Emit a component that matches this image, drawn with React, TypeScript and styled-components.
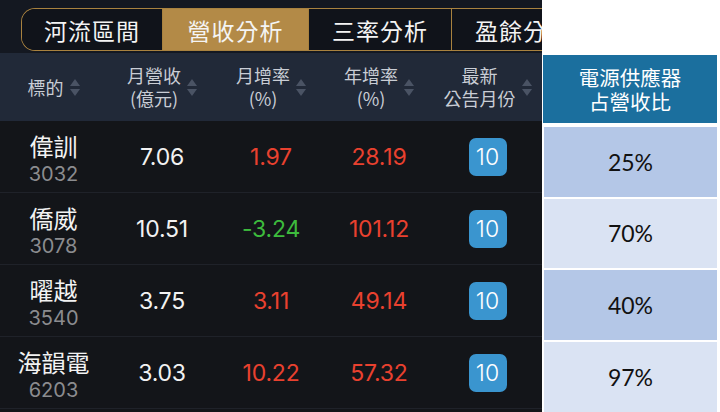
import React from "react";
import styled, { createGlobalStyle } from "styled-components";

const Global = createGlobalStyle`
  html, body { margin: 0; padding: 0; background: #ffffff; }
  body { width: 720px; height: 412px; overflow: hidden; }
`;

const Page = styled.div`
  display: flex;
  width: 720px;
  height: 412px;
  background: #ffffff;
  font-family: "Inter", "Noto Sans CJK TC", sans-serif;
`;

const Left = styled.div`
  width: 542px;
  height: 412px;
  background: #131519;
  overflow: hidden;
  display: flex;
  flex-direction: column;
`;

const TabBar = styled.div`
  height: 53px;
  box-sizing: border-box;
  padding: 8px 0 0 21px;
  background: #141821;
  flex: none;
`;

const Tabs = styled.div`
  display: flex;
  width: 600px;
  height: 43px;
  box-sizing: border-box;
  border: 1.5px solid #a9823f;
  border-right: none;
  border-radius: 14px 0 0 14px;
  overflow: hidden;
`;

const Tab = styled.div<{ $active?: boolean; $w: number }>`
  width: ${(p) => p.$w}px;
  flex: none;
  display: flex;
  align-items: center;
  justify-content: center;
  box-sizing: border-box;
  border-right: 1.5px solid #a9823f;
  background: ${(p) => (p.$active ? "#b38a47" : "#10131a")};
  color: #f4f4f4;
  font-family: "Noto Sans CJK TC", sans-serif;
  font-size: 23px;
  letter-spacing: 1px;
`;

const cols = "107px 110px 108px 108px 1fr";

const HeaderRow = styled.div`
  display: grid;
  grid-template-columns: ${cols};
  height: 68px;
  background: #212938;
  flex: none;
`;

const HeadCell = styled.div`
  display: flex;
  align-items: center;
  justify-content: center;
  gap: 6px;
`;

const HeadText = styled.div`
  color: #c9cdd5;
  font-family: "Noto Sans CJK TC", sans-serif;
  font-size: 18px;
  line-height: 23px;
  text-align: center;
`;

const Arrows = styled.div`
  display: flex;
  flex-direction: column;
  gap: 3px;
  margin-top: 1px;
`;

const Row = styled.div`
  display: grid;
  grid-template-columns: ${cols};
  height: 72px;
  box-sizing: border-box;
  border-bottom: 1px solid #1f2229;
  flex: none;
`;

const Cell = styled.div`
  display: flex;
  align-items: center;
  justify-content: center;
`;

const NameBox = styled.div`
  display: flex;
  flex-direction: column;
  align-items: center;
  padding-top: 5px;
`;

const Name = styled.div`
  color: #f2f2f2;
  font-family: "Noto Sans CJK TC", sans-serif;
  font-size: 24px;
  line-height: 30px;
`;

const Code = styled.div`
  color: #8b8c8f;
  font-size: 20px;
  line-height: 26px;
`;

const Num = styled.div<{ $color: string }>`
  color: ${(p) => p.$color};
  font-size: 23px;
  font-weight: 400;
  letter-spacing: -0.2px;
`;

const Badge = styled.div`
  width: 38px;
  height: 38px;
  border-radius: 7px;
  background: #3a95cf;
  color: #ffffff;
  font-size: 23px;
  font-weight: 300;
  display: flex;
  align-items: center;
  justify-content: center;
`;

const Right = styled.div`
  flex: 1;
  display: flex;
  flex-direction: column;
  padding: 55px 3px 0 1px;
  gap: 2px;
`;

const RHead = styled.div`
  height: 68px;
  background: #1b6f9e;
  color: #ffffff;
  font-family: "Noto Sans CJK TC", sans-serif;
  font-size: 20.5px;
  line-height: 24px;
  display: flex;
  flex-direction: column;
  align-items: center;
  justify-content: center;
  margin-bottom: 2px;
`;

const RCell = styled.div<{ $dark: boolean }>`
  height: 70px;
  margin-left: 1px;
  background: ${(p) => (p.$dark ? "#b4c7e7" : "#dae3f3")};
  color: #111111;
  font-family: "Lato", "Noto Sans", sans-serif;
  font-size: 23px;
  display: flex;
  align-items: center;
  justify-content: center;
`;

const SortIcon = () => (
  <Arrows>
    <svg width="10" height="7" viewBox="0 0 10 7">
      <path d="M5 0 L10 7 L0 7 Z" fill="#4a5364" />
    </svg>
    <svg width="10" height="7" viewBox="0 0 10 7">
      <path d="M0 0 L10 0 L5 7 Z" fill="#4a5364" />
    </svg>
  </Arrows>
);

const RED = "#e9412f";
const GREEN = "#3dbb3d";
const WHITE = "#f2f2f2";

const rows = [
  { name: "偉訓", code: "3032", rev: "7.06", mom: "1.97", yoy: "28.19", pct: "25%" },
  { name: "僑威", code: "3078", rev: "10.51", mom: "-3.24", yoy: "101.12", pct: "70%" },
  { name: "曜越", code: "3540", rev: "3.75", mom: "3.11", yoy: "49.14", pct: "40%" },
  { name: "海韻電", code: "6203", rev: "3.03", mom: "10.22", yoy: "57.32", pct: "97%" },
];

const headers: string[][] = [
  ["標的"],
  ["月營收", "(億元)"],
  ["月增率", "(%)"],
  ["年增率", "(%)"],
  ["最新", "公告月份"],
];

export default function App() {
  return (
    <Page>
      <Global />
      <Left>
        <TabBar>
          <Tabs>
            <Tab $w={141}>河流區間</Tab>
            <Tab $w={146} $active>營收分析</Tab>
            <Tab $w={143}>三率分析</Tab>
            <Tab $w={143}>盈餘分析</Tab>
          </Tabs>
        </TabBar>
        <HeaderRow>
          {headers.map((h, i) => (
            <HeadCell key={i}>
              <HeadText>
                {h.map((l, j) => (
                  <div key={j}>{l}</div>
                ))}
              </HeadText>
              <SortIcon />
            </HeadCell>
          ))}
        </HeaderRow>
        {rows.map((r) => (
          <Row key={r.code}>
            <Cell>
              <NameBox>
                <Name>{r.name}</Name>
                <Code>{r.code}</Code>
              </NameBox>
            </Cell>
            <Cell>
              <Num $color={WHITE}>{r.rev}</Num>
            </Cell>
            <Cell>
              <Num $color={r.mom.startsWith("-") ? GREEN : RED}>{r.mom}</Num>
            </Cell>
            <Cell>
              <Num $color={RED}>{r.yoy}</Num>
            </Cell>
            <Cell>
              <Badge>10</Badge>
            </Cell>
          </Row>
        ))}
      </Left>
      <Right>
        <RHead>
          <div>電源供應器</div>
          <div>占營收比</div>
        </RHead>
        {rows.map((r, i) => (
          <RCell key={r.code} $dark={i % 2 === 0}>
            {r.pct}
          </RCell>
        ))}
      </Right>
    </Page>
  );
}
